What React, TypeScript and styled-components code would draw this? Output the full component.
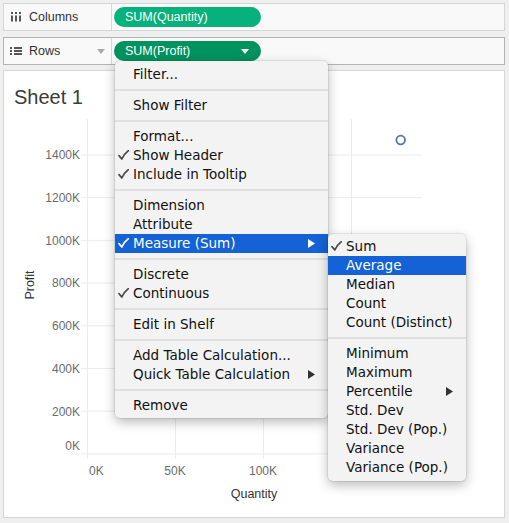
import React from "react";
import styled, { createGlobalStyle } from "styled-components";

const Global = createGlobalStyle`
  html, body { margin: 0; padding: 0; background: #efefef; }
  #root { width: 509px; height: 523px; }
`;

const Page = styled.div`
  position: relative;
  width: 509px;
  height: 523px;
  box-sizing: border-box;
  padding: 3px 4px 0 3px;
  display: flex;
  flex-direction: column;
  background: #efefef;
  font-family: "Liberation Sans", Arial, sans-serif;
  overflow: hidden;
`;

const Shelf = styled.div<{ $focused?: boolean; $gap: number }>`
  display: flex;
  flex: none;
  height: 28px;
  box-sizing: border-box;
  border: 1px solid ${(p) => (p.$focused ? "#b3b3b3" : "#d6d6d6")};
  background: #f9f9f9;
  margin-bottom: ${(p) => p.$gap}px;
`;

const LabelCell = styled.div`
  flex: none;
  width: 108px;
  border-right: 1px solid #d6d6d6;
  display: flex;
  align-items: center;
  padding-left: 6px;
  gap: 7px;
  box-sizing: border-box;
  color: #333;
  font-size: 12.5px;
  position: relative;
`;

const LabelText = styled.span`
  flex: 1;
`;

const Caret = styled.svg`
  flex: none;
  margin-right: 6px;
`;

const PillCell = styled.div`
  flex: 1;
  display: flex;
  align-items: center;
  padding-left: 2px;
`;

const Pill = styled.div<{ $selected?: boolean }>`
  width: 147px;
  height: 20px;
  box-sizing: border-box;
  border-radius: 10px;
  background: ${(p) => (p.$selected ? "#00925f" : "#06b17c")};
  color: #fff;
  font-size: 12.5px;
  display: flex;
  align-items: center;
  padding: 0 12px 0 11px;
`;

const PillText = styled.span`
  flex: 1;
`;

const Panel = styled.div`
  flex: none;
  height: 448px;
  box-sizing: border-box;
  border: 1px solid #d6d6d6;
  background: #fff;
  display: flex;
  flex-direction: column;
`;

const Title = styled.div`
  height: 40px;
  box-sizing: border-box;
  padding: 16px 0 0 10px;
  font-size: 20px;
  line-height: 20px;
  color: #3a3a3a;
`;

const Chart = styled.svg`
  display: block;
  width: 501px;
  height: 406px;
  font-family: "Liberation Sans", Arial, sans-serif;
`;

const Menu = styled.div<{ $left: number; $top: number; $width: number; $pt: number; $pb: number }>`
  position: absolute;
  left: ${(p) => p.$left}px;
  top: ${(p) => p.$top}px;
  width: ${(p) => p.$width}px;
  box-sizing: border-box;
  padding: ${(p) => p.$pt}px 0 ${(p) => p.$pb}px;
  background: #f3f3f3;
  border-radius: 5px;
  box-shadow: 0 0 0 1px rgba(0, 0, 0, 0.07), 0 4px 12px rgba(0, 0, 0, 0.28);
  font-family: "DejaVu Sans", "Liberation Sans", sans-serif;
  font-size: 13.5px;
  color: #111;
`;

const Item = styled.div<{ $active?: boolean }>`
  height: 19px;
  box-sizing: border-box;
  display: flex;
  align-items: center;
  padding: 0 13px 1px 2px;
  background: ${(p) => (p.$active ? "#1462d5" : "transparent")};
  color: ${(p) => (p.$active ? "#fff" : "#111")};
  white-space: nowrap;
`;

const Check = styled.span`
  flex: none;
  width: 16px;
  height: 18px;
  display: flex;
  align-items: center;
  justify-content: flex-start;
  padding-left: 1px;
  box-sizing: border-box;
`;

const ItemText = styled.span`
  flex: 1;
`;

const Separator = styled.div`
  height: 2px;
  background: #dfdfdf;
  margin: 5px 0;
`;

type Entry = { label?: string; check?: boolean; arrow?: boolean; active?: boolean; sep?: boolean };

const mainMenu: Entry[] = [
  { label: "Filter..." },
  { sep: true },
  { label: "Show Filter" },
  { sep: true },
  { label: "Format..." },
  { label: "Show Header", check: true },
  { label: "Include in Tooltip", check: true },
  { sep: true },
  { label: "Dimension" },
  { label: "Attribute" },
  { label: "Measure (Sum)", check: true, arrow: true, active: true },
  { sep: true },
  { label: "Discrete" },
  { label: "Continuous", check: true },
  { sep: true },
  { label: "Edit in Shelf" },
  { sep: true },
  { label: "Add Table Calculation..." },
  { label: "Quick Table Calculation", arrow: true },
  { sep: true },
  { label: "Remove" },
];

const subMenu: Entry[] = [
  { label: "Sum", check: true },
  { label: "Average", active: true },
  { label: "Median" },
  { label: "Count" },
  { label: "Count (Distinct)" },
  { sep: true },
  { label: "Minimum" },
  { label: "Maximum" },
  { label: "Percentile", arrow: true },
  { label: "Std. Dev" },
  { label: "Std. Dev (Pop.)" },
  { label: "Variance" },
  { label: "Variance (Pop.)" },
];

const Arrow = ({ color }: { color: string }) => (
  <svg width="7" height="9" viewBox="0 0 7 9">
    <polygon points="0,0 7,4.5 0,9" fill={color} />
  </svg>
);

const CheckMark = ({ color }: { color: string }) => (
  <svg width="11" height="10" viewBox="0 0 11 10">
    <path d="M1 5.6 L3.8 9 Q6 4 10.4 0.6" fill="none" stroke={color} strokeWidth="1.7" strokeLinecap="round" strokeLinejoin="round" />
  </svg>
);

const MenuList = ({ entries }: { entries: Entry[] }) => (
  <>
    {entries.map((e, i) =>
      e.sep ? (
        <Separator key={i} />
      ) : (
        <Item key={i} $active={e.active}>
          <Check>{e.check && <CheckMark color={e.active ? "#fff" : "#4a4a4a"} />}</Check>
          <ItemText>{e.label}</ItemText>
          {e.arrow && <Arrow color={e.active ? "#fff" : "#333"} />}
        </Item>
      )
    )}
  </>
);

const ColumnsIcon = () => (
  <svg width="12" height="10" viewBox="0 0 12 10">
    {[1, 5, 9].map((x) => (
      <g key={x} fill="#555">
        <rect x={x} y={0} width={2} height={2} />
        <rect x={x} y={3.5} width={2} height={6} />
      </g>
    ))}
  </svg>
);

const RowsIcon = () => (
  <svg width="12" height="8" viewBox="0 0 12 8">
    {[0, 3, 6].map((y) => (
      <g key={y} fill="#555">
        <rect x={0} y={y} width={2} height={2} />
        <rect x={4} y={y} width={8} height={2} />
      </g>
    ))}
  </svg>
);

// chart coordinates (svg origin at page x=4, y=111)
const OX = 4;
const OY = 111;
const yTicks = [
  { label: "1400K", y: 155 },
  { label: "1200K", y: 197.7 },
  { label: "1000K", y: 240.4 },
  { label: "800K", y: 283.1 },
  { label: "600K", y: 325.8 },
  { label: "400K", y: 368.5 },
  { label: "200K", y: 411.2 },
  { label: "0K", y: 453.9 },
];
const xLines = [87.5, 175.5, 263.5, 351.5];

export default function App() {
  return (
    <>
      <Global />
      <Page>
        <Shelf $gap={6}>
          <LabelCell>
            <ColumnsIcon />
            <LabelText>Columns</LabelText>
          </LabelCell>
          <PillCell>
            <Pill>
              <PillText>SUM(Quantity)</PillText>
            </Pill>
          </PillCell>
        </Shelf>
        <Shelf $gap={5} $focused>
          <LabelCell>
            <RowsIcon />
            <LabelText>Rows</LabelText>
            <Caret width="8" height="5" viewBox="0 0 8 5">
              <polygon points="0,0 8,0 4,5" fill="#aaa" />
            </Caret>
          </LabelCell>
          <PillCell>
            <Pill $selected>
              <PillText>SUM(Profit)</PillText>
              <svg width="8" height="5" viewBox="0 0 8 5">
                <polygon points="0,0 8,0 4,5" fill="#fff" />
              </svg>
            </Pill>
          </PillCell>
        </Shelf>
        <Panel>
          <Title>Sheet 1</Title>
          <Chart viewBox="0 0 501 406">
            {yTicks.map((t) => (
              <line key={t.label} x1={81 - OX} x2={422 - OX} y1={t.y - OY} y2={t.y - OY} stroke="#ececec" strokeWidth="1" />
            ))}
            {xLines.map((x) => (
              <line key={x} x1={x - OX} x2={x - OX} y1={119 - OY} y2={459 - OY} stroke="#ececec" strokeWidth="1" />
            ))}
            {yTicks.map((t, i) => (
              <text
                key={"l" + t.label}
                x={80 - OX}
                y={(i === yTicks.length - 1 ? 445.7 : t.y) - OY + 4.3}
                textAnchor="end"
                fontSize="12"
                fill="#6b6b6b"
              >
                {t.label}
              </text>
            ))}
            <text x={89 - OX} y={474.5 - OY} fontSize="12" fill="#6b6b6b">0K</text>
            <text x={175 - OX} y={474.5 - OY} fontSize="12" fill="#6b6b6b" textAnchor="middle">50K</text>
            <text x={263 - OX} y={474.5 - OY} fontSize="12" fill="#6b6b6b" textAnchor="middle">100K</text>
            <text x={254 - OX} y={498 - OY} fontSize="12.5" fill="#333" textAnchor="middle">Quantity</text>
            <text
              transform={`translate(${34 - OX}, ${285 - OY}) rotate(-90)`}
              fontSize="12.5"
              fill="#333"
              textAnchor="middle"
            >
              Profit
            </text>
            <circle cx={400.7 - OX} cy={140 - OY} r="4.3" fill="none" stroke="#4e79a7" strokeWidth="1.8" />
          </Chart>
        </Panel>
        <Menu $left={115} $top={61} $width={213} $pt={4} $pb={3}>
          <MenuList entries={mainMenu} />
        </Menu>
        <Menu $left={328} $top={234} $width={138} $pt={3} $pb={4}>
          <MenuList entries={subMenu} />
        </Menu>
      </Page>
    </>
  );
}
